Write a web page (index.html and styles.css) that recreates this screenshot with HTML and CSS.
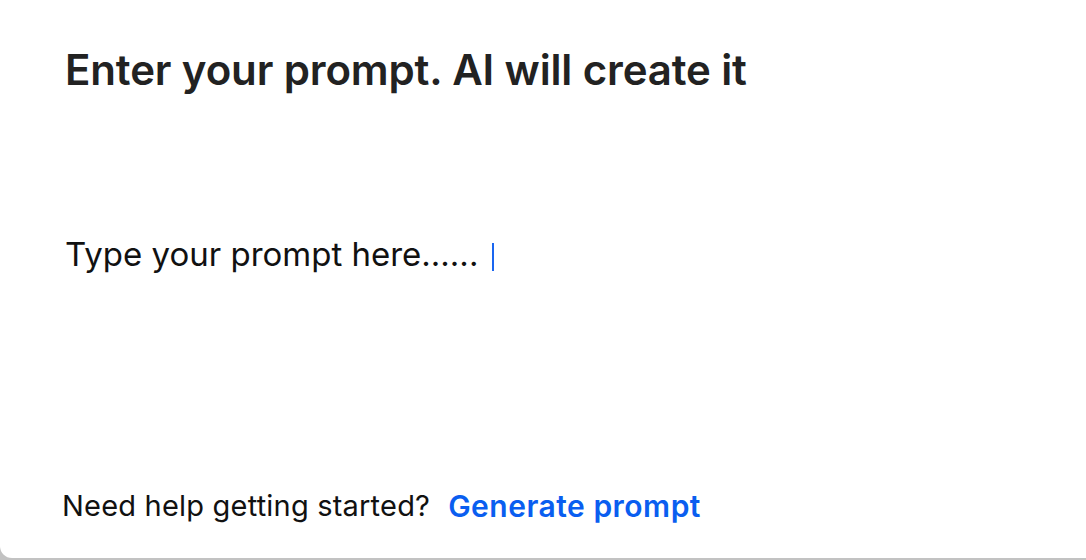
FILE: index.html
```html
<!DOCTYPE html>
<html lang="en">
<head>
<meta charset="utf-8">
<title>AI Prompt</title>
<link rel="stylesheet" href="styles.css">
</head>
<body>
<main class="card">
  <h1 class="title">Enter your prompt. AI will create it</h1>
  <div class="prompt">Type your prompt here......<span class="caret"></span></div>
  <div class="footer">
    <span class="help">Need help getting started?</span>
    <a class="generate" href="#">Generate prompt</a>
  </div>
</main>
</body>
</html>
```

FILE: styles.css
```css
html, body {
  margin: 0;
  padding: 0;
  background: #c2c2c2;
}
body {
  width: 1086px;
  height: 560px;
  overflow: hidden;
  font-family: Inter, "Noto Sans", sans-serif;
}
.card {
  box-sizing: border-box;
  height: 558px;
  background: #ffffff;
  border-bottom-left-radius: 12px;
  display: flex;
  flex-direction: column;
  padding: 45px 0 35px 65px;
}
.title {
  margin: 0;
  font-size: 42px;
  line-height: 50px;
  font-weight: 600;
  color: #222222;
  letter-spacing: -0.13px;
}
.prompt {
  margin-top: 139px;
  font-size: 33px;
  line-height: 40px;
  font-weight: 400;
  color: #111111;
  letter-spacing: 0;
}
.caret {
  display: inline-block;
  width: 2px;
  height: 28px;
  margin-left: 14px;
  background: #1a66f0;
  vertical-align: -5px;
}
.footer {
  margin-top: auto;
  margin-left: -3px;
  font-size: 29px;
  line-height: 34px;
  display: flex;
  gap: 18px;
}
.help {
  color: #111111;
  letter-spacing: 0.2px;
}
.generate {
  color: #0a5ef0;
  font-weight: 600;
  text-decoration: none;
  font-size: 30px;
  letter-spacing: 0.5px;
}
```
